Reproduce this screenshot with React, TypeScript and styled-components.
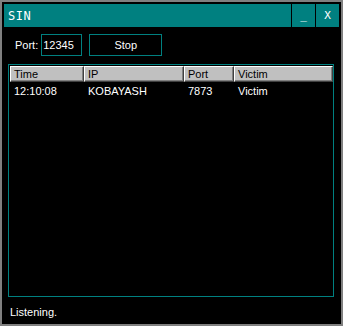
import React from 'react';
import styled, { createGlobalStyle } from 'styled-components';

const GlobalStyle = createGlobalStyle`
  html, body {
    margin: 0;
    padding: 0;
    background: #000;
  }
`;

const columns = [
  { key: 'time', label: 'Time', width: 74 },
  { key: 'ip', label: 'IP', width: 100 },
  { key: 'port', label: 'Port', width: 50 },
  { key: 'victim', label: 'Victim', width: 99 },
];

const rows = [{ time: '12:10:08', ip: 'KOBAYASH', port: '7873', victim: 'Victim' }];

const App = () => {
  return (
    <Window>
      <GlobalStyle />
      <TitleBar>
        <Caption>SIN</Caption>
        <TitleButton>_</TitleButton>
        <TitleButton>X</TitleButton>
      </TitleBar>
      <Body>
        <Toolbar>
          <Label>Port:</Label>
          <PortInput defaultValue="12345" />
          <StopButton>Stop</StopButton>
        </Toolbar>
        <ListView>
          <HeaderRow>
            {columns.map((c) => (
              <HeaderCell key={c.key} $width={c.width}>
                {c.label}
              </HeaderCell>
            ))}
          </HeaderRow>
          {rows.map((r, i) => (
            <Row key={i}>
              {columns.map((c) => (
                <Cell key={c.key} $width={c.width}>
                  {r[c.key as keyof typeof r]}
                </Cell>
              ))}
            </Row>
          ))}
        </ListView>
        <Status>Listening.</Status>
      </Body>
    </Window>
  );
};

export default App;

const Window = styled.div`
  width: 343px;
  height: 326px;
  box-sizing: border-box;
  border: 2px solid #808080;
  padding: 2px;
  background: #000;
  display: flex;
  flex-direction: column;
  font-family: 'Liberation Sans', Arial, sans-serif;
  font-size: 11px;
  color: #fff;
`;

const TitleBar = styled.div`
  display: flex;
  height: 23px;
  gap: 1px;
  flex-shrink: 0;
`;

const Caption = styled.div`
  flex: 1;
  background: #008080;
  display: flex;
  align-items: center;
  padding-left: 4px;
  font-family: 'DejaVu Sans Mono', monospace;
  font-size: 12px;
  letter-spacing: 0.5px;
`;

const TitleButton = styled.div`
  width: 23px;
  background: #008080;
  display: flex;
  align-items: center;
  justify-content: center;
  font-family: 'DejaVu Sans Mono', monospace;
  font-size: 11px;
`;

const Body = styled.div`
  flex: 1;
  display: flex;
  flex-direction: column;
  padding: 7px 3px 0 4px;
`;

const Toolbar = styled.div`
  display: flex;
  align-items: center;
  height: 22px;
  padding-left: 7px;
`;

const Label = styled.span`
  margin-right: 3px;
`;

const PortInput = styled.input`
  width: 41px;
  height: 22px;
  box-sizing: border-box;
  border: 1px solid #008080;
  background: #000;
  color: #fff;
  font-family: 'Liberation Sans', Arial, sans-serif;
  font-size: 11px;
  padding: 0 0 0 1px;
  outline: none;
`;

const StopButton = styled.button`
  width: 73px;
  height: 22px;
  margin-left: 7px;
  box-sizing: border-box;
  border: 1px solid #008080;
  background: #000;
  color: #fff;
  font-family: 'Liberation Sans', Arial, sans-serif;
  font-size: 11px;
  padding: 0;
`;

const ListView = styled.div`
  margin-top: 8px;
  height: 233px;
  width: 326px;
  box-sizing: border-box;
  border: 1px solid #008080;
  padding: 1px 0 0 1px;
  display: flex;
  flex-direction: column;
`;

const HeaderRow = styled.div`
  display: flex;
  height: 16px;
`;

const HeaderCell = styled.div<{ $width: number }>`
  width: ${(p) => p.$width}px;
  box-sizing: border-box;
  background: #c0c0c0;
  color: #000;
  border-top: 1px solid #fff;
  border-left: 1px solid #fff;
  border-right: 1px solid #404040;
  border-bottom: 1px solid #404040;
  box-shadow: inset -1px -1px 0 #808080;
  padding-left: 3px;
  display: flex;
  align-items: center;
  line-height: 1;
`;

const Row = styled.div`
  display: flex;
  height: 18px;
  align-items: center;
`;

const Cell = styled.div<{ $width: number }>`
  width: ${(p) => p.$width}px;
  box-sizing: border-box;
  padding-left: 4px;
  white-space: nowrap;
  overflow: hidden;
`;

const Status = styled.div`
  margin-top: 9px;
  padding-left: 2px;
`;
